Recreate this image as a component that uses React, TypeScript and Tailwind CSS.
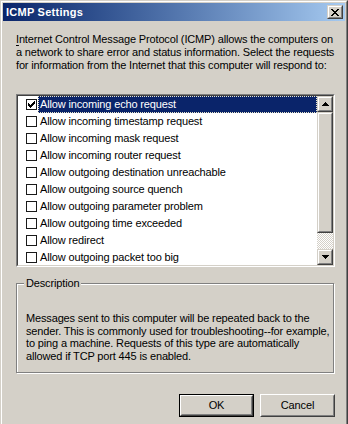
import React from "react";

const FONT: React.CSSProperties = { fontFamily: '"Liberation Sans", Arial, sans-serif' };

const rows = [
  "Allow incoming echo request",
  "Allow incoming timestamp request",
  "Allow incoming mask request",
  "Allow incoming router request",
  "Allow outgoing destination unreachable",
  "Allow outgoing source quench",
  "Allow outgoing parameter problem",
  "Allow outgoing time exceeded",
  "Allow redirect",
  "Allow outgoing packet too big",
];

function CheckMark() {
  return (
    <svg width="7" height="7" viewBox="0 0 7 7" shapeRendering="crispEdges">
      <path
        d="M0 2h1v3h-1zM1 3h1v3h-1zM2 4h1v3h-1zM3 3h1v3h-1zM4 2h1v3h-1zM5 1h1v3h-1zM6 0h1v3h-1z"
        fill="#000"
      />
    </svg>
  );
}

function CloseGlyph() {
  return (
    <svg width="8" height="7" viewBox="0 0 8 7" shapeRendering="crispEdges">
      <path
        d="M0 0h2v1h-2zM6 0h2v1h-2zM1 1h2v1h-2zM5 1h2v1h-2zM2 2h4v1h-4zM3 3h2v1h-2zM2 4h4v1h-4zM1 5h2v1h-2zM5 5h2v1h-2zM0 6h2v1h-2zM6 6h2v1h-2z"
        fill="#000"
      />
    </svg>
  );
}

function UpArrow() {
  return (
    <svg width="7" height="4" viewBox="0 0 7 4" shapeRendering="crispEdges">
      <path d="M3 0h1v1h-1zM2 1h3v1h-3zM1 2h5v1h-5zM0 3h7v1h-7z" fill="#000" />
    </svg>
  );
}

function DownArrow() {
  return (
    <svg width="7" height="4" viewBox="0 0 7 4" shapeRendering="crispEdges">
      <path d="M0 0h7v1h-7zM1 1h5v1h-5zM2 2h3v1h-3zM3 3h1v1h-1z" fill="#000" />
    </svg>
  );
}

function RaisedBox({ className, children }: { className: string; children?: React.ReactNode }) {
  return (
    <div
      className={
        "border border-t-[#d4d0c8] border-l-[#d4d0c8] border-r-[#404040] border-b-[#404040] " +
        className
      }
    >
      <div className="w-full h-full border border-t-white border-l-white border-r-[#808080] border-b-[#808080] bg-[#d4d0c8] flex items-center justify-center">
        {children}
      </div>
    </div>
  );
}

function PushButton({ label, isDefault }: { label: string; isDefault?: boolean }) {
  const inner = (
    <div className="w-full h-full border border-t-white border-l-white border-r-[#404040] border-b-[#404040]">
      <div className="w-full h-full border border-t-[#d4d0c8] border-l-[#d4d0c8] border-r-[#808080] border-b-[#808080] flex items-center justify-center">
        {label}
      </div>
    </div>
  );
  return (
    <div className={"w-[75px] h-[23px] " + (isDefault ? "border border-black" : "")}>{inner}</div>
  );
}

export default function App() {
  return (
    <div
      className="w-[348px] h-[424px] overflow-hidden bg-[#d4d0c8] text-[11px] text-black tracking-[-0.15px]"
      style={FONT}
    >
      <div className="h-[440px] border-t border-l border-r border-t-[#d4d0c8] border-l-[#d4d0c8] border-r-[#404040]">
        <div className="h-full border-t border-l border-r border-t-white border-l-white border-r-[#808080] px-[1px] pt-[1px]">
          {/* Caption */}
          <div className="h-[18px] flex items-center justify-between pl-[3px] pr-[2px] bg-gradient-to-r from-[#0a246a] to-[#a6caf0]">
            <span className="text-white font-bold text-[11px] tracking-[0.25px] leading-[13px]">
              ICMP Settings
            </span>
            <RaisedBox className="w-[16px] h-[14px]">
              <CloseGlyph />
            </RaisedBox>
          </div>

          {/* Client area */}
          <div className="mt-[1px] pl-[13px] pt-[11px]">
            <div className="leading-[13px]">
              <div className="whitespace-nowrap">
                <span className="underline underline-offset-[2px]">I</span>nternet Control Message Protocol (ICMP) allows the computers on
              </div>
              <div className="whitespace-nowrap">
                a network to share error and status information. Select the requests
              </div>
              <div className="whitespace-nowrap">
                for information from the Internet that this computer will respond to:
              </div>
            </div>

            {/* List box */}
            <div className="mt-[22px] w-[319px] h-[173px] border border-t-[#808080] border-l-[#808080] border-r-white border-b-white">
              <div className="h-full border border-t-[#404040] border-l-[#404040] border-r-[#d4d0c8] border-b-[#d4d0c8] bg-white flex">
                <div className="flex-1 overflow-hidden flex flex-col">
                  {rows.map((r, i) => (
                    <div key={r} className="h-[17px] shrink-0 flex items-center">
                      <div className="ml-[8px] w-[11px] h-[11px] border border-[#1a1a1a] bg-white flex items-center justify-center shrink-0">
                        {i === 0 ? <CheckMark /> : null}
                      </div>
                      {i === 0 ? (
                        <div className="ml-[1px] flex-1 h-full bg-[#0a246a] text-white border border-dotted border-[#e8e4c8] flex items-center pl-[1px] whitespace-nowrap">
                          {r}
                        </div>
                      ) : (
                        <div className="ml-[1px] flex-1 h-full flex items-center pl-[2px] whitespace-nowrap">
                          {r}
                        </div>
                      )}
                    </div>
                  ))}
                </div>
                {/* Scrollbar */}
                <div className="w-[16px] flex flex-col">
                  <RaisedBox className="w-[16px] h-[16px] shrink-0">
                    <UpArrow />
                  </RaisedBox>
                  <RaisedBox className="w-[16px] h-[121px] shrink-0" />
                  <div className="flex-1 bg-[image:repeating-conic-gradient(#ffffff_0%_25%,#d4d0c8_0%_50%)] bg-[length:2px_2px]" />
                  <RaisedBox className="w-[16px] h-[16px] shrink-0">
                    <DownArrow />
                  </RaisedBox>
                </div>
              </div>
            </div>

            {/* Description group */}
            <fieldset className="mt-[10px] w-[318px] h-[96px] border border-[#808080] shadow-[inset_1px_1px_0_#ffffff,1px_1px_0_#ffffff] pl-[9px] pr-[4px] pt-[22px]">
              <legend className="ml-[-2px] px-[2px] leading-[13px] bg-[#d4d0c8]">Description</legend>
              <div className="leading-[12.7px]">
                <div className="whitespace-nowrap">Messages sent to this computer will be repeated back to the</div>
                <div className="whitespace-nowrap">sender. This is commonly used for troubleshooting--for example,</div>
                <div className="whitespace-nowrap">to ping a machine. Requests of this type are automatically</div>
                <div className="whitespace-nowrap">allowed if TCP port 445 is enabled.</div>
              </div>
            </fieldset>

            {/* Buttons */}
            <div className="mt-[21px] w-[319px] flex justify-end gap-[6px]">
              <PushButton label="OK" isDefault />
              <PushButton label="Cancel" />
            </div>
          </div>
        </div>
      </div>
    </div>
  );
}
